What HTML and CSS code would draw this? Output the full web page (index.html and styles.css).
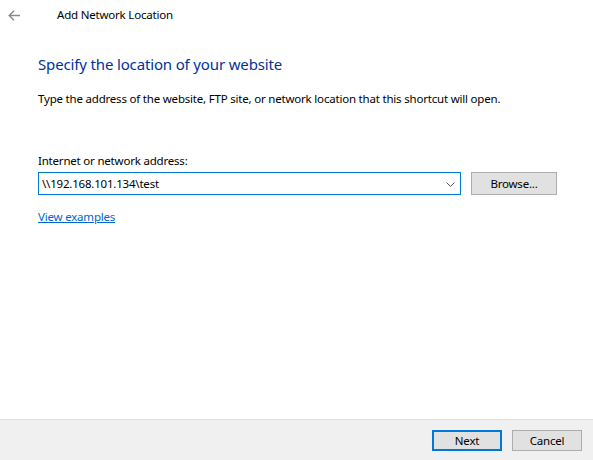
FILE: index.html
```html
<!DOCTYPE html>
<html lang="en">
<head>
  <meta charset="UTF-8">
  <title>Add Network Location</title>
  <link rel="stylesheet" href="styles.css">
</head>
<body>
  <div class="wizard">
    <!-- Title bar -->
    <div class="title-bar">
      <span class="back">
        <svg width="12" height="11" viewBox="0 0 12 11">
          <path d="M12 5.5H1.2 M6 0.8L1.2 5.5L6 10.2" fill="none" stroke="#8a8a8a" stroke-width="1.4"/>
        </svg>
      </span>
      <span class="title">Add Network Location</span>
    </div>

    <!-- Page content -->
    <div class="content">
      <h1>Specify the location of your website</h1>
      <p class="intro">Type the address of the website, FTP site, or network location that this shortcut will open.</p>

      <label for="address">Internet or network address:</label>
      <div class="address-row">
        <div class="combo">
          <input type="text" id="address" value="\\192.168.101.134\test">
          <svg class="chevron" width="9" height="5" viewBox="0 0 9 5">
            <path d="M0.5 0.5L4.5 4.5L8.5 0.5" fill="none" stroke="#555" stroke-width="1"/>
          </svg>
        </div>
        <button type="button" class="btn browse">Browse...</button>
      </div>

      <a href="#" class="examples">View examples</a>
    </div>

    <!-- Buttons -->
    <div class="footer">
      <button type="button" class="btn default">Next</button>
      <button type="button" class="btn">Cancel</button>
    </div>
  </div>
</body>
</html>
```

FILE: styles.css
```css
body {
  margin: 0;
  font-family: "Noto Sans", "Open Sans", sans-serif;
  font-size: 11.5px;
  letter-spacing: -0.2px;
  color: #000;
  background: #fff;
}
.wizard {
  height: 460px;
  display: flex;
  flex-direction: column;
}
.title-bar {
  height: 30px;
  display: flex;
  align-items: center;
}
.back {
  width: 12px;
  height: 11px;
  margin-left: 8px;
  display: flex;
}
.title {
  margin-left: 37px;
  line-height: 16px;
}
.content {
  flex: 1;
  padding: 0 36px 0 38px;
}
h1 {
  margin: 23px 0 0;
  font-size: 15px;
  letter-spacing: -0.15px;
  font-weight: normal;
  color: #003399;
  line-height: 22px;
}
.intro {
  margin: 16px 0 0;
  line-height: 16px;
}
label {
  display: block;
  margin-top: 46px;
  line-height: 16px;
}
.address-row {
  display: flex;
  margin-top: 3px;
}
.combo {
  position: relative;
  width: 423px;
  height: 23px;
}
.combo input {
  width: 100%;
  height: 23px;
  box-sizing: border-box;
  border: 1px solid #0078d7;
  padding: 0 24px 0 3px;
  font-family: inherit;
  font-size: 11.5px;
  letter-spacing: -0.2px;
  outline: none;
}
.chevron {
  position: absolute;
  right: 6px;
  top: 10px;
}
.btn {
  font-family: inherit;
  font-size: 11.5px;
  letter-spacing: -0.2px;
  height: 23px;
  background: #e1e1e1;
  border: 1px solid #adadad;
  padding: 0;
  color: #000;
}
.browse {
  width: 86px;
  margin-left: 10px;
}
.examples {
  display: inline-block;
  margin-top: 14px;
  color: #0066cc;
  line-height: 16px;
}
.footer {
  height: 40px;
  background: #f0f0f0;
  border-top: 1px solid #dfdfdf;
  display: flex;
  align-items: center;
  justify-content: flex-end;
  padding-right: 11px;
  gap: 10px;
}
.footer .btn {
  width: 70px;
  height: 21px;
}
.footer .default {
  border: 2px solid #0078d7;
}
```
